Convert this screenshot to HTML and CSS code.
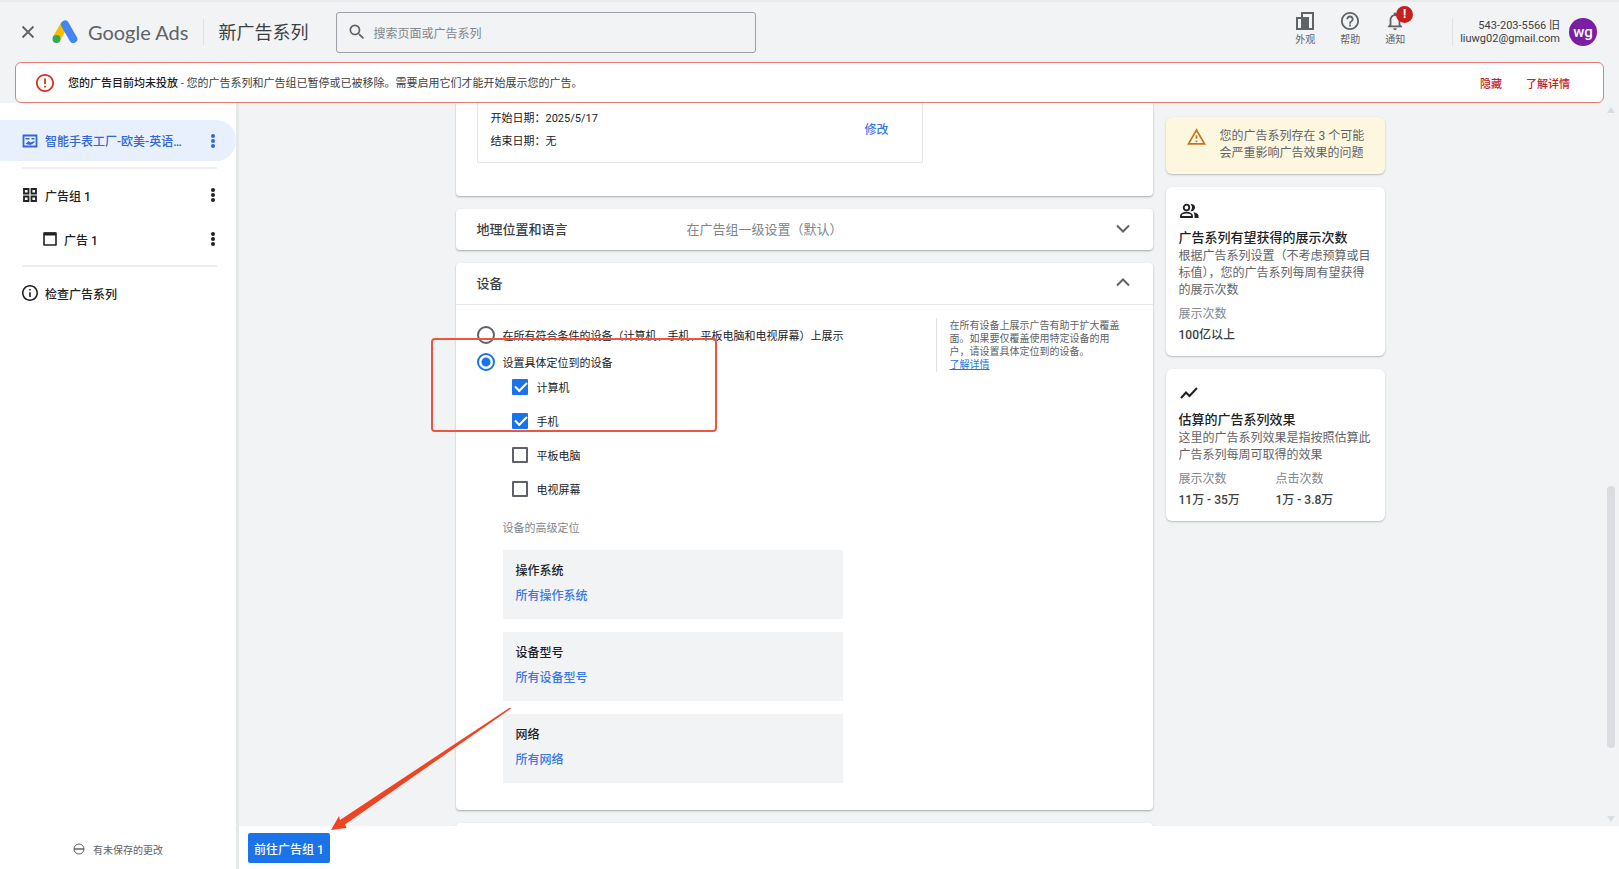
FILE: index.html
```html
<!DOCTYPE html>
<html lang="zh-CN">
<head>
    <meta charset="UTF-8">
    <meta name="viewport" content="width=device-width, initial-scale=1.0">
    <title>新广告系列 - Google Ads</title>
    <link rel="stylesheet" href="styles.css">
</head>
<body>
    <header class="topbar">
        <button class="icon-btn close" aria-label="关闭">
            <svg width="14" height="14" viewBox="0 0 14 14"><path d="M1.5 1.5l11 11M12.500 1.500l-11 11" stroke="#5f6368" stroke-width="1.800" fill="none"/></svg>
        </button>
        <a href="#" class="brand">
            <svg width="26" height="24" viewBox="0 0 26 24">
                <path d="M4.500 18.500L12.600 4.500" stroke="#fbbc04" stroke-width="8" fill="none"/>
                <path d="M13 4.500L21.300 19" stroke="#4285f4" stroke-width="8" stroke-linecap="round" fill="none"/>
                <circle cx="4.500" cy="19" r="4" fill="#34a853"/>
            </svg>
            <span>Google Ads</span>
        </a>
        <h1>新广告系列</h1>
        <label class="search">
            <svg width="20" height="20" viewBox="0 0 24 24"><path fill="#5f6368" d="M15.500 14h-.79l-.28-.27A6.470 6.470 0 0 0 16 9.500 6.500 6.500 0 1 0 9.500 16c1.610 0 3.090-.59 4.230-1.570l.27.28v.79l5 4.990L20.490 19l-4.990-5zm-6 0C7.010 14 5 11.990 5 9.500S7.010 5 9.500 5 14 7.010 14 9.500 11.990 14 9.500 14z"/></svg>
            <input type="text" placeholder="搜索页面或广告系列" aria-label="搜索">
        </label>
        <nav class="tools">
            <button class="tool">
                <svg width="18" height="18" viewBox="0 0 18 18"><path d="M1 6h5v11H1zM6 17V1h11v16H6" fill="none" stroke="#5f6368" stroke-width="2"/><path fill="#5f6368" d="M6 5h7v13H6z"/></svg>
                外观
            </button>
            <button class="tool">
                <svg width="18" height="18" viewBox="2 2 20 20"><path fill="#5f6368" d="M11 18h2v-2h-2v2zm1-16C6.480 2 2 6.480 2 12s4.480 10 10 10 10-4.480 10-10S17.520 2 12 2zm0 18c-4.410 0-8-3.590-8-8s3.590-8 8-8 8 3.590 8 8-3.590 8-8 8zm0-14c-2.210 0-4 1.790-4 4h2c0-1.100.9-2 2-2s2 .9 2 2c0 2-3 1.750-3 5h2c0-2.250 3-2.500 3-5 0-2.210-1.790-4-4-4z"/></svg>
                帮助
            </button>
            <button class="tool">
                <svg width="18" height="18" viewBox="2 2 20 20"><path fill="#5f6368" d="M12 22c1.100 0 2-.9 2-2h-4c0 1.100.9 2 2 2zm6-6v-5c0-3.070-1.630-5.640-4.500-6.320V4c0-.83-.67-1.500-1.500-1.500s-1.500.67-1.500 1.500v.68C7.640 5.360 6 7.920 6 11v5l-2 2v1h16v-1l-2-2zm-2 1H8v-6c0-2.480 1.510-4.500 4-4.500s4 2.020 4 4.500v6z"/></svg>
                通知
                <span class="badge">!</span>
            </button>
        </nav>
        <div class="account">
            <div class="account-text">543-203-5566 旧<br>liuwg02@gmail.com</div>
            <button class="avatar">wg</button>
        </div>
    </header>

    <div class="alert">
        <svg width="18" height="18" viewBox="2 2 20 20"><path fill="#d93025" d="M11 15h2v2h-2zm0-8h2v6h-2zm1-5C6.470 2 2 6.500 2 12s4.480 10 10 10 10-4.480 10-10S17.520 2 12 2zm0 18c-4.420 0-8-3.580-8-8s3.580-8 8-8 8 3.580 8 8-3.580 8-8 8z"/></svg>
        <p><strong>您的广告目前均未投放</strong> - 您的广告系列和广告组已暂停或已被移除。需要启用它们才能开始展示您的广告。</p>
        <button>隐藏</button>
        <button>了解详情</button>
    </div>

    <div class="workspace">
        <aside class="sidebar">
            <ul>
                <li class="nav-item active">
                    <svg width="16" height="16" viewBox="0 0 16 16"><path fill="none" stroke="currentColor" stroke-width="1.800" d="M1.500 2.500h13v11h-13z"/><path fill="currentColor" d="M3.500 5h4v1.500h-4zM9.500 5h3v1.500h-3zM3.500 11l3-3 2 1.500L12.500 8v1.500L8.500 12z"/></svg>
                    <a href="#">智能手表工厂-欧美-英语…</a>
                    <button class="dots" aria-label="更多"><i></i><i></i><i></i></button>
                </li>
                <li class="line"></li>
                <li class="nav-item">
                    <svg width="16" height="16" viewBox="0 0 16 16"><path fill="none" stroke="currentColor" stroke-width="1.800" d="M2 2h4.500v4.500H2zM9.500 2H14v4.500H9.500zM2 9.500h4.500V14H2zM9.500 9.500H14V14H9.500z"/></svg>
                    <a href="#">广告组 1</a>
                    <button class="dots" aria-label="更多"><i></i><i></i><i></i></button>
                </li>
                <li class="nav-item child">
                    <svg width="14" height="16" viewBox="0 0 14 16"><path fill="none" stroke="currentColor" stroke-width="1.600" stroke-linejoin="round" d="M1 2h12v12H1z"/><path fill="currentColor" d="M1 1.500h12v3H1z"/></svg>
                    <a href="#">广告 1</a>
                    <button class="dots" aria-label="更多"><i></i><i></i><i></i></button>
                </li>
                <li class="line"></li>
                <li class="nav-item">
                    <svg width="16" height="16" viewBox="2 2 20 20"><path fill="currentColor" d="M11 7h2v2h-2zm0 4h2v6h-2zm1-9C6.480 2 2 6.480 2 12s4.480 10 10 10 10-4.480 10-10S17.520 2 12 2zm0 18c-4.410 0-8-3.590-8-8s3.590-8 8-8 8 3.590 8 8-3.590 8-8 8z"/></svg>
                    <a href="#">检查广告系列</a>
                </li>
            </ul>
            <div class="unsaved">
                <svg width="12" height="12" viewBox="0 0 12 12"><circle cx="6" cy="6" r="5" fill="none" stroke="#5f6368"/><path d="M1 6h10" stroke="#5f6368" stroke-width="1.500"/></svg>
                有未保存的更改
            </div>
        </aside>

        <div class="content">
            <main class="scroll">
                <div class="columns">
                    <div class="settings">
                        <section class="card dates">
                            <div class="dates-box">
                                <div>
                                    <p>开始日期：2025/5/17</p>
                                    <p>结束日期：无</p>
                                </div>
                                <button>修改</button>
                            </div>
                        </section>

                        <section class="card">
                            <div class="card-head">
                                <h2>地理位置和语言</h2>
                                <span>在广告组一级设置（默认）</span>
                                <button class="icon-btn" aria-label="展开"><svg width="14" height="9" viewBox="0 0 14 9"><path d="M1 1.500l6 6 6-6" fill="none" stroke="#5f6368" stroke-width="2"/></svg></button>
                            </div>
                        </section>

                        <section class="card devices">
                            <div class="card-head">
                                <h2>设备</h2>
                                <button class="icon-btn" aria-label="收起"><svg width="14" height="9" viewBox="0 0 14 9"><path d="M1 7.500l6-6 6 6" fill="none" stroke="#5f6368" stroke-width="2"/></svg></button>
                            </div>
                            <div class="device-body">
                                <div class="options">
                                    <label class="radio"><input type="radio" name="device">在所有符合条件的设备（计算机、手机、平板电脑和电视屏幕）上展示</label>
                                    <label class="radio"><input type="radio" name="device" checked>设置具体定位到的设备</label>
                                    <div class="checks">
                                        <label><input type="checkbox" checked>计算机</label>
                                        <label><input type="checkbox" checked>手机</label>
                                        <label><input type="checkbox">平板电脑</label>
                                        <label><input type="checkbox">电视屏幕</label>
                                    </div>
                                    <div class="advanced">
                                        <h3>设备的高级定位</h3>
                                        <div class="target"><h4>操作系统</h4><a href="#">所有操作系统</a></div>
                                        <div class="target"><h4>设备型号</h4><a href="#">所有设备型号</a></div>
                                        <div class="target"><h4>网络</h4><a href="#">所有网络</a></div>
                                    </div>
                                </div>
                                <div class="hint">
                                    在所有设备上展示广告有助于扩大覆盖面。如果要仅覆盖使用特定设备的用户，请设置具体定位到的设备。<br><a href="#">了解详情</a>
                                </div>
                            </div>
                            <div class="highlight"></div>
                        </section>

                        <section class="card next"></section>
                    </div>

                    <aside class="insights">
                        <div class="tile warning">
                            <svg width="19" height="17" viewBox="1 2 22 19"><path fill="#c5761a" d="M12 5.990L19.530 19H4.470L12 5.990M12 2L1 21h22L12 2zm1 14h-2v2h2v-2zm0-6h-2v4h2v-4z"/></svg>
                            <p>您的广告系列存在 3 个可能会严重影响广告效果的问题</p>
                        </div>
                        <div class="tile">
                            <svg width="20" height="16" viewBox="0 0 20 16"><circle cx="7.500" cy="4.500" r="2.800" fill="none" stroke="#202124" stroke-width="1.800"/><path fill="none" stroke="#202124" stroke-width="1.800" d="M2 14v-1.500c0-1.700 3-2.800 5.500-2.800s5.500 1.100 5.500 2.800V14z"/><path fill="#202124" d="M11.500 1a3.700 3.700 0 1 1 0 7.200 5.500 5.500 0 0 0 0-7.200zM14.500 9.300c2.800.5 5 1.600 5 3.500V15h-4v-2.200c0-1.400-.4-2.600-1-3.500z"/></svg>
                            <h2>广告系列有望获得的展示次数</h2>
                            <p>根据广告系列设置（不考虑预算或目标值），您的广告系列每周有望获得的展示次数</p>
                            <dl>
                                <div><dt>展示次数</dt><dd>100亿以上</dd></div>
                            </dl>
                        </div>
                        <div class="tile">
                            <svg width="20" height="16" viewBox="0 0 20 16"><path d="M2 13l5-5.500 3.500 3.500L18 3" fill="none" stroke="#202124" stroke-width="2"/></svg>
                            <h2>估算的广告系列效果</h2>
                            <p>这里的广告系列效果是指按照估算此广告系列每周可取得的效果</p>
                            <dl>
                                <div><dt>展示次数</dt><dd>11万 - 35万</dd></div>
                                <div><dt>点击次数</dt><dd>1万 - 3.8万</dd></div>
                            </dl>
                        </div>
                    </aside>
                </div>
                <div class="scrollbar"><i class="up"></i><i class="thumb"></i><i class="down"></i></div>
            </main>
            <footer class="actions">
                <button>前往广告组 1</button>
            </footer>
            <!-- arrow pointing at the next-step button -->
            <svg class="arrow" width="180" height="124" viewBox="0 0 180 124"><path fill="#ef4423" d="M179 .5L180 1.500 14 117.500 15.500 121 0 123 8 109 9 113z"/></svg>
        </div>
    </div>
</body>
</html>
```

FILE: styles.css
```css
* {
    box-sizing: border-box;
    margin: 0;
    padding: 0;
}
body {
    display: flex;
    flex-direction: column;
    height: 100vh;
    overflow: hidden;
    background-color: #f1f3f4;
    border-top: 2px solid #e8eaeb;
    font-family: Roboto, "Noto Sans CJK SC", sans-serif;
    font-size: 11px;
    color: #3c4043;
}
button {
    border: 0;
    background: none;
    font: inherit;
    color: inherit;
    cursor: pointer;
}
a {
    color: inherit;
    text-decoration: none;
}
ul {
    list-style: none;
}
svg {
    display: block;
    flex: none;
}

/* header */
.topbar {
    display: flex;
    align-items: center;
    flex: none;
    height: 60px;
    padding: 0 22px 0 21px;
}
.brand {
    display: flex;
    align-items: center;
    gap: 10px;
    margin-left: 17px;
    padding-right: 15px;
    border-right: 1px solid #dfe1e5;
    font-family: Lato, sans-serif;
    font-size: 20px;
    line-height: 26px;
    color: #5f6368;
}
.topbar h1 {
    margin: 0 28px 3px 14px;
    font-size: 18px;
    font-weight: 400;
}
.search {
    display: flex;
    align-items: center;
    gap: 6px;
    width: 420px;
    height: 41px;
    padding: 0 10px;
    border: 1px solid #9aa0a6;
    border-radius: 3px;
}
.search input {
    flex: 1;
    padding-top: 3px;
    border: 0;
    outline: 0;
    background: none;
    font: inherit;
    font-size: 12px;
}
.search input::placeholder {
    color: #80868b;
}
.tools {
    display: flex;
    gap: 25px;
    margin: 0 0 6px auto;
    padding-right: 47px;
}
.tool {
    position: relative;
    display: flex;
    flex-direction: column;
    align-items: center;
    gap: 3px;
    font-size: 10px;
    line-height: 14px;
    color: #5f6368;
}
.badge {
    position: absolute;
    top: -6px;
    left: 11px;
    width: 17px;
    border-radius: 50%;
    background-color: #c5221f;
    font-size: 12px;
    font-weight: 700;
    line-height: 17px;
    color: #fff;
}
.account {
    display: flex;
    align-items: center;
    gap: 9px;
    padding-left: 7px;
    border-left: 1px solid #dfe1e5;
}
.account-text {
    font-size: 11px;
    line-height: 13px;
    text-align: right;
}
.avatar {
    width: 28px;
    height: 28px;
    border-radius: 50%;
    background-color: #7b1fa2;
    font-size: 15px;
    font-weight: 500;
    color: #fff;
}

/* red notice */
.alert {
    display: flex;
    align-items: center;
    flex: none;
    height: 41px;
    margin: 0 15px;
    padding: 0 33px 0 20px;
    border: 1px solid #ea7a73;
    border-radius: 6px;
    background-color: #fff;
}
.alert p {
    flex: 1;
    margin-left: 14px;
    padding-bottom: 2px;
}
.alert strong {
    font-weight: 500;
    color: #202124;
}
.alert button {
    margin-left: 24px;
    font-weight: 500;
    color: #c5221f;
}

.workspace {
    display: flex;
    flex: 1;
    min-height: 0;
}

/* sidebar */
.sidebar {
    display: flex;
    flex-direction: column;
    justify-content: space-between;
    flex: none;
    width: 239px;
    padding-top: 17px;
    border-right: 3px solid #e6e9ea;
    background-color: #fff;
}
.nav-item {
    display: flex;
    align-items: center;
    gap: 7px;
    height: 44px;
    padding: 0 19px 0 22px;
    font-size: 12px;
    font-weight: 500;
    color: #202124;
}
.nav-item a {
    flex: 1;
    white-space: nowrap;
}
.nav-item.active {
    height: 41px;
    border-radius: 0 20px 20px 0;
    background-color: #e8f0fe;
    color: #3367d6;
}
.nav-item.child {
    padding-left: 43px;
}
.line {
    height: 2px;
    margin: 4px 19px 4px 22px;
    background-color: #eceef0;
}
.active + .line {
    margin-top: 6px;
}
.dots {
    display: grid;
    gap: 1px;
    padding: 4px 2px;
}
.dots i {
    width: 4px;
    height: 4px;
    border-radius: 50%;
    background-color: currentColor;
}
.unsaved {
    display: flex;
    align-items: center;
    justify-content: center;
    gap: 8px;
    height: 40px;
    font-size: 10px;
    color: #5f6368;
}

/* main area */
.content {
    position: relative;
    display: flex;
    flex-direction: column;
    flex: 1;
    min-width: 0;
}
.scroll {
    position: relative;
    flex: 1;
    min-height: 0;
    overflow: hidden;
}
.columns {
    display: grid;
    grid-template-columns: minmax(0, 697px) 219px;
    justify-content: center;
    gap: 13px;
    padding-right: 18px;
}
.settings {
    display: flex;
    flex-direction: column;
    gap: 13px;
}
.card {
    position: relative;
    border-radius: 4px;
    background-color: #fff;
    box-shadow: 0 1px 2px rgba(60, 64, 67, 0.4);
}
.dates {
    padding: 0 21px 33px;
    border-radius: 0 0 4px 4px;
}
.dates-box {
    display: flex;
    align-items: center;
    justify-content: space-between;
    width: 446px;
    padding: 4px 33px 9px 13px;
    border: 1px solid #e4e6e8;
    border-top: 0;
    line-height: 23px;
    color: #202124;
}
.dates-box button {
    font-size: 12px;
    font-weight: 500;
    color: #3b78e7;
}
.card-head {
    display: flex;
    align-items: center;
    height: 41px;
    padding: 0 23px 2px 21px;
    font-size: 13px;
}
.card-head h2 {
    width: 210px;
    font-size: 13px;
    font-weight: 500;
}
.card-head span {
    color: #80868b;
}
.card-head button {
    margin-left: auto;
}
.devices .card-head {
    height: 42px;
    border-bottom: 1px solid #e4e6e8;
}
.device-body {
    display: flex;
    justify-content: space-between;
    padding: 16px 27px 27px 21px;
}
.options {
    width: 366px;
}
.options label {
    display: flex;
    align-items: center;
    color: #202124;
    white-space: nowrap;
}
.radio {
    gap: 8px;
    height: 27px;
}
.options input {
    appearance: none;
    flex: none;
    border: 2px solid #5f6368;
}
.radio input {
    width: 18px;
    height: 18px;
    border-radius: 50%;
}
.radio input:checked {
    border-color: #1a73e8;
    background: radial-gradient(circle, #1a73e8 4px, #fff 5px);
}
.checks {
    display: grid;
    gap: 10px;
    padding-left: 35px;
}
.checks label {
    gap: 9px;
    height: 24px;
}
.checks input {
    position: relative;
    width: 16px;
    height: 16px;
    border-radius: 1px;
}
.checks input:checked {
    border-color: #1a73e8;
    background-color: #1a73e8;
}
.checks input:checked::after {
    content: "";
    position: absolute;
    top: 1px;
    left: 1px;
    width: 10px;
    height: 5px;
    border: solid #fff;
    border-width: 0 0 2px 2px;
    transform: rotate(-45deg);
}
.advanced {
    display: grid;
    gap: 13px;
    margin-top: 20px;
    padding-left: 26px;
}
.advanced h3 {
    font-size: 11px;
    font-weight: 400;
    line-height: 16px;
    color: #80868b;
}
.target {
    height: 69px;
    padding: 13px;
    background-color: #f1f3f4;
    font-size: 12px;
    line-height: 17px;
}
.target h4 {
    margin-bottom: 8px;
    font-size: 12px;
    font-weight: 500;
    color: #202124;
}
.target a {
    display: block;
    font-weight: 500;
    color: #3b78e7;
}
.hint {
    align-self: flex-start;
    width: 190px;
    margin-top: -3px;
    padding: 1px 0 1px 13px;
    border-left: 1px solid #dfe1e5;
    font-size: 10px;
    line-height: 13px;
    color: #5f6368;
}
.hint a {
    color: #1a73e8;
    text-decoration: underline;
}
/* marks the selected devices */
.highlight {
    position: absolute;
    top: 75px;
    left: -25px;
    width: 286px;
    height: 94px;
    border: 2px solid #ee5540;
    border-radius: 4px;
    pointer-events: none;
}
.next {
    height: 60px;
}

/* right column */
.insights {
    display: flex;
    flex-direction: column;
    gap: 13px;
    padding-top: 14px;
}
.tile {
    padding: 16px 12px 12px 13px;
    border-radius: 6px;
    background-color: #fff;
    box-shadow: 0 1px 2px rgba(60, 64, 67, 0.3);
    font-size: 12px;
    line-height: 17px;
    color: #5f6368;
}
.tile h2 {
    margin: 10px 0 1px;
    font-size: 13px;
    font-weight: 500;
    line-height: 18px;
    color: #202124;
}
.tile dl {
    display: grid;
    grid-template-columns: 1fr 1fr;
    margin-top: 7px;
}
.tile dt {
    color: #80868b;
}
.tile dd {
    margin-top: 4px;
    font-weight: 500;
    color: #3c4043;
}
.warning {
    display: flex;
    gap: 14px;
    padding: 11px 19px 12px 21px;
    background-color: #fef7e0;
}

.scrollbar {
    position: absolute;
    top: 4px;
    right: 4px;
    bottom: 4px;
    width: 8px;
}
.scrollbar i {
    position: absolute;
    width: 8px;
}
.thumb {
    top: 53%;
    bottom: 74px;
    border-radius: 4px;
    background-color: #dadce0;
}
.up,
.down {
    border: solid transparent;
    border-width: 0 4px;
}
.up {
    top: 0;
    border-bottom: 6px solid #dadce0;
}
.down {
    bottom: 0;
    border-top: 6px solid #dadce0;
}

.actions {
    display: flex;
    flex: none;
    padding: 7px 9px 6px;
    background-color: #fff;
}
.actions button {
    height: 30px;
    padding: 0 6px;
    border-radius: 2px;
    background-color: #1a73e8;
    font-size: 12px;
    font-weight: 500;
    color: #fff;
}
.arrow {
    position: absolute;
    left: 92px;
    bottom: 38px;
}
```
